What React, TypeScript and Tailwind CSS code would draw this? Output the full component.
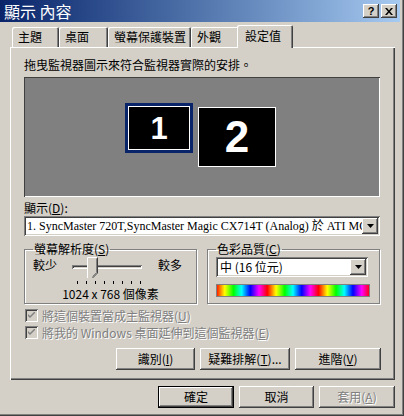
import React from "react"

const RAISED = "shadow-[inset_-1px_-1px_#404040,inset_1px_1px_#ffffff,inset_-2px_-2px_#808080,inset_2px_2px_#d4d0c8]"
const SUNKEN = "shadow-[inset_1px_1px_#808080,inset_-1px_-1px_#ffffff,inset_2px_2px_#404040,inset_-2px_-2px_#d4d0c8]"
const DISABLED = "text-[#808080] [text-shadow:1px_1px_0_#ffffff]"

function Arrow() {
  return (
    <div className={`w-[16px] h-[16px] bg-[#d4d0c8] flex items-center justify-center ${RAISED}`}>
      <svg width="7" height="4" viewBox="0 0 7 4">
        <path d="M0 0h7L3.5 4z" fill="#000" />
      </svg>
    </div>
  )
}

function Hot({ k }: { k: string }) {
  return (
    <>
      (<span className="underline">{k}</span>)
    </>
  )
}

function Check({ label }: { label: React.ReactNode }) {
  return (
    <div className="flex items-center h-[17px]">
      <div className={`w-[13px] h-[13px] ml-[1px] bg-[#d4d0c8] flex items-center justify-center ${SUNKEN}`}>
        <svg width="7" height="7" viewBox="0 0 7 7">
          <path d="M0 2l2 2 5-5v2l-5 5-2-2z" fill="#808080" />
        </svg>
      </div>
      <span className={`ml-[4px] text-[12px] leading-[14px] ${DISABLED}`}>{label}</span>
    </div>
  )
}

function Btn({ w, children, off }: { w: string; children: React.ReactNode; off?: boolean }) {
  return (
    <div className={`${w} h-[22px] flex items-center justify-center text-[12px] leading-[14px] ${off ? DISABLED : "text-black"} ${RAISED}`}>
      {children}
    </div>
  )
}

const tabs = [
  { t: "主題", w: "w-[47px]" },
  { t: "桌面", w: "w-[49px]" },
  { t: "螢幕保護裝置", w: "w-[83px]" },
  { t: "外觀", w: "w-[48px]" },
]

export default function App() {
  return (
    <div className="w-[404px] h-[416px] bg-[#d4d0c8] flex flex-col font-['Noto_Sans_CJK_TC','Noto_Sans',sans-serif] text-black shadow-[inset_-1px_-1px_#404040,inset_-2px_-2px_#808080] overflow-hidden">
      {/* title bar */}
      <div className="h-[22px] w-[400px] flex items-center bg-linear-to-r from-[#0a246a] to-[#a6caf0]">
        <span className="ml-[4px] text-white text-[16px] leading-[20px]">顯示 內容</span>
        <div className="ml-auto mr-[3px] flex">
          <div className={`w-[16px] h-[14px] bg-[#d4d0c8] flex items-center justify-center text-[11px] font-bold leading-none font-['Liberation_Sans',sans-serif] ${RAISED}`}>?</div>
          <div className={`ml-[2px] w-[16px] h-[14px] bg-[#d4d0c8] flex items-center justify-center ${RAISED}`}>
            <svg width="8" height="7" viewBox="0 0 8 7">
              <path d="M0 0h2l2 2.5L6 0h2L5 3.5 8 7H6L4 4.5 2 7H0l3-3.5z" fill="#000" />
            </svg>
          </div>
        </div>
      </div>

      {/* tabs */}
      <div className="mt-[3px] ml-[12px] flex items-end h-[22px] text-[12px] leading-[14px]">
        {tabs.map((tab) => (
          <div key={tab.t} className={`${tab.w} h-[20px] flex items-center pl-[6px] rounded-t-[2px] shadow-[inset_1px_1px_#ffffff,inset_-1px_0_#404040,inset_-2px_0_#808080]`}>
            {tab.t}
          </div>
        ))}
        <div className="relative z-10 -ml-[2px] -mb-[1px] w-[56px] h-[23px] bg-[#d4d0c8] flex items-center pl-[8px] pb-[2px] rounded-t-[2px] shadow-[inset_1px_1px_#ffffff,inset_-1px_0_#404040,inset_-2px_0_#808080]">
          設定值
        </div>
      </div>

      {/* panel */}
      <div className="ml-[10px] w-[385px] h-[333px] pl-[14px] pt-[11px] shadow-[inset_1px_1px_#ffffff,inset_-1px_-1px_#404040,inset_-2px_-2px_#808080] text-[12px] leading-[14px]">
        <div>拖曳監視器圖示來符合監視器實際的安排。</div>

        <div className="relative mt-[5px] w-[356px] h-[120px] bg-[#808080] shadow-[inset_1px_1px_#404040,inset_-1px_-1px_#ffffff]">
          <div className="absolute left-[101px] top-[26px] w-[68px] h-[50px] bg-[#0a246a] p-[3px]">
            <div className="w-full h-full bg-black border border-white flex items-center justify-center text-white font-bold text-[31px] leading-none font-['Liberation_Sans',sans-serif]">1</div>
          </div>
          <div className="absolute left-[174px] top-[30px] w-[78px] h-[60px] bg-black border border-white flex items-center justify-center text-white font-bold text-[44px] leading-none font-['Liberation_Sans',sans-serif]">2</div>
        </div>

        <div className="mt-[4px]">顯示<Hot k="D" />:</div>
        <div className={`mt-[1px] w-[356px] h-[20px] bg-white flex items-center pl-[3px] pr-[2px] ${SUNKEN}`}>
          <span className="flex-1 overflow-hidden whitespace-nowrap font-['Liberation_Serif','Noto_Sans_CJK_TC',serif] text-[12px]">
            1. SyncMaster 720T,SyncMaster Magic CX714T (Analog) 於 ATI MOBILITY RADEON
          </span>
          <Arrow />
        </div>

        <div className="mt-[7px] flex gap-[10px]">
          <fieldset className="w-[173px] h-[61px] px-[8px] border border-[#808080] shadow-[1px_1px_0_#ffffff,inset_1px_1px_0_#ffffff]">
            <legend className="px-[1px] leading-[12px]">螢幕解析度<Hot k="S" /></legend>
            <div className="flex h-[22px] mt-[2px]">
              <span className="w-[31px] pt-[1px]">較少</span>
              <div className="relative w-[86px] h-[22px]">
                <div className="mx-[8px] mt-[8px] h-[4px] shadow-[inset_1px_1px_#808080,inset_-1px_-1px_#ffffff,inset_2px_2px_#404040]" />
                <svg className="absolute left-[23px] top-[0px]" width="11" height="22" viewBox="0 0 11 22">
                  <path d="M0 0h11v16l-5.5 5.5L0 16z" fill="#d4d0c8" />
                  <path d="M0.5 21V0.5h10" stroke="#fff" fill="none" />
                  <path d="M10.5 0.5v15.5l-5 5" stroke="#404040" fill="none" />
                  <path d="M9.5 1.5v14l-4 4" stroke="#808080" fill="none" />
                </svg>
              </div>
              <span className="ml-[8px] pt-[1px]">較多</span>
            </div>
            <div className="mt-[2px] ml-[44px] w-[64px] h-[3px] flex justify-between">
              {[0, 1, 2, 3, 4, 5, 6, 7].map((i) => (
                <div key={i} className="w-[1px] h-[3px] bg-black" />
              ))}
            </div>
            <div className="mt-[3px] text-center">1024 x 768 個像素</div>
          </fieldset>

          <fieldset className="w-[173px] h-[61px] px-[8px] border border-[#808080] shadow-[1px_1px_0_#ffffff,inset_1px_1px_0_#ffffff]">
            <legend className="px-[1px] leading-[12px]">色彩品質<Hot k="C" /></legend>
            <div className={`mt-[2px] w-[152px] h-[20px] bg-white flex items-center pl-[4px] pr-[2px] ${SUNKEN}`}>
              <span className="flex-1">中 (16 位元)</span>
              <Arrow />
            </div>
            <svg className="mt-[7px] block" width="154" height="13" viewBox="0 0 154 13">
              <defs>
                <linearGradient id="rb" x1="0" x2="51.3" y1="0" y2="0" gradientUnits="userSpaceOnUse" spreadMethod="repeat">
                  <stop offset="0" stopColor="#ff0000" />
                  <stop offset="0.17" stopColor="#ffff00" />
                  <stop offset="0.34" stopColor="#00ff00" />
                  <stop offset="0.5" stopColor="#00ffff" />
                  <stop offset="0.67" stopColor="#0000ff" />
                  <stop offset="0.84" stopColor="#ff00ff" />
                  <stop offset="1" stopColor="#ff0000" />
                </linearGradient>
              </defs>
              <rect x="0" y="0" width="154" height="13" fill="url(#rb)" />
              <rect x="0.5" y="0.5" width="153" height="12" fill="none" stroke="#808080" />
            </svg>
          </fieldset>
        </div>

        <div className="mt-[3px]">
          <Check label={<>將這個裝置當成主監視器<Hot k="U" /></>} />
          <Check label={<>將我的 Windows 桌面延伸到這個監視器<Hot k="E" /></>} />
        </div>

        <div className="mt-[7px] w-[357px] flex justify-end gap-[5px]">
          <Btn w="w-[79px]">識別<Hot k="I" /></Btn>
          <Btn w="w-[90px]">疑難排解<Hot k="T" />...</Btn>
          <Btn w="w-[86px]">進階<Hot k="V" /></Btn>
        </div>
      </div>

      {/* dialog buttons */}
      <div className="mt-[6px] ml-[10px] w-[385px] flex justify-end gap-[5px]">
        <div className="w-[76px] h-[22px] border border-black">
          <div className={`w-full h-full flex items-center justify-center text-[12px] leading-[14px] ${RAISED}`}>確定</div>
        </div>
        <Btn w="w-[75px]">取消</Btn>
        <Btn w="w-[76px]" off>套用<Hot k="A" /></Btn>
      </div>
    </div>
  )
}
